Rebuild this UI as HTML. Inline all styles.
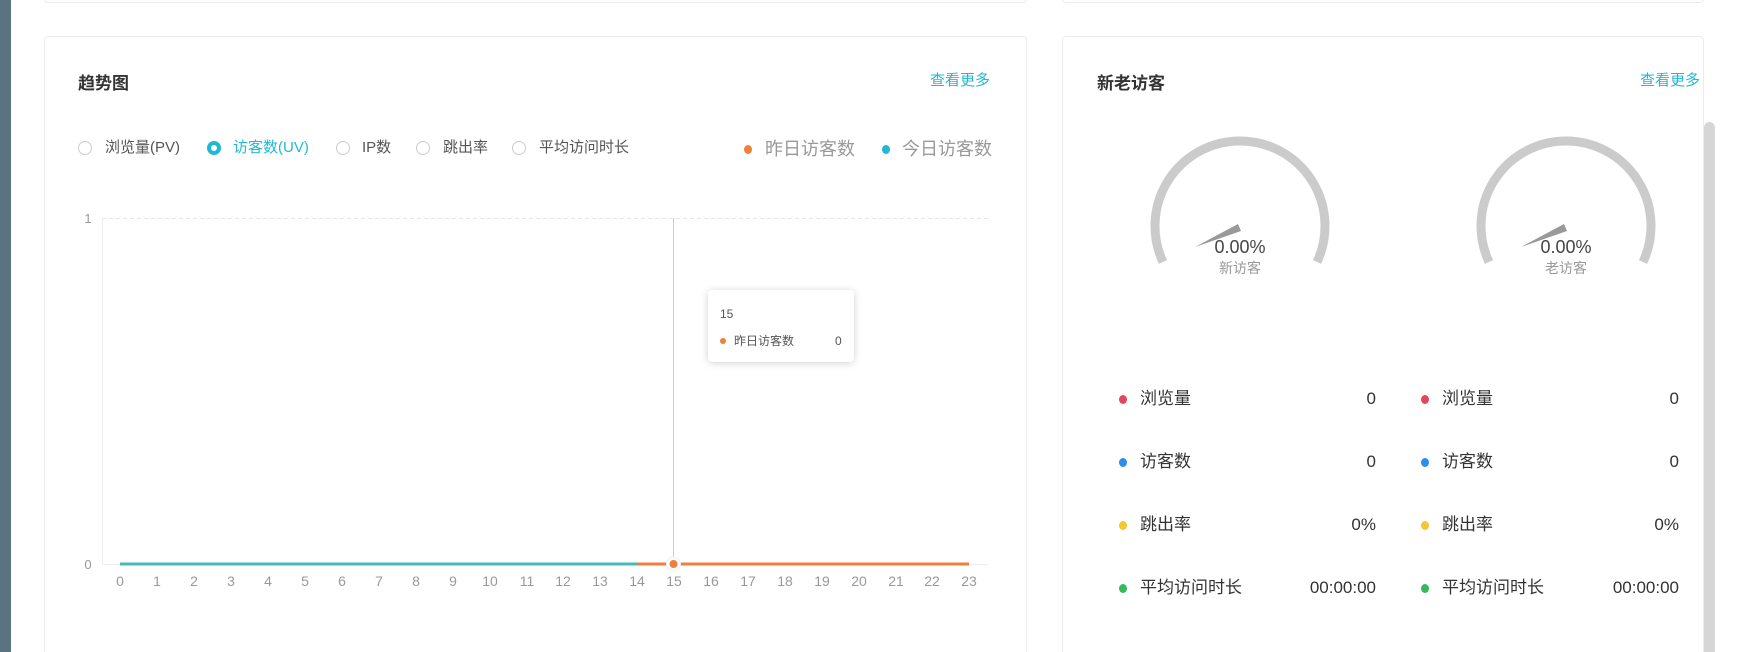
<!DOCTYPE html>
<html><head><meta charset="utf-8"><style>
*{margin:0;padding:0;box-sizing:border-box}
html{width:1740px;height:652px;overflow:hidden}
body{width:1740px;height:652px;background:#fff;position:relative;overflow:hidden;font-family:"Liberation Sans","Noto Sans CJK SC",sans-serif;color:#333;line-height:20px}
.abs{position:absolute;white-space:nowrap;line-height:20px}
.card{position:absolute;border:1px solid #ececec;border-radius:4px;background:#fff}
.title{font-size:17px;font-weight:bold;color:#333}
.more{font-size:15px;color:#22b8d4}
.radio{position:absolute;width:14px;height:14px;border:1px solid #ccc;border-radius:50%}
.rt{font-size:15px;color:#555}
.st{font-size:17px;color:#333}
.dot{position:absolute;width:8px;height:9px;border-radius:50%}
</style></head><body>
<div class="abs" style="left:0;top:0;width:11px;height:652px;background:#5b7283"></div>
<div class="card" style="left:44px;top:-10px;width:983px;height:13px"></div>
<div class="card" style="left:1062px;top:-10px;width:642px;height:13px"></div>
<div class="card" style="left:44px;top:36px;width:983px;height:620px"></div>
<div class="card" style="left:1062px;top:36px;width:642px;height:620px"></div>
<div class="abs" style="left:1704px;top:122px;width:11px;height:530px;background:#d6d6d6;border-radius:6px 6px 0 0"></div>

<div class="abs title" style="left:78px;top:74px">趋势图</div>
<div class="abs more" style="left:930px;top:71px">查看更多</div>
<div class="abs title" style="left:1097px;top:74px">新老访客</div>
<div class="abs more" style="left:1640px;top:71px">查看更多</div>

<div class="radio" style="left:78px;top:141px"></div><div class="abs rt" style="left:105px;top:138px">浏览量(PV)</div>
<div class="radio" style="left:207px;top:141px;border:4px solid #22b8d4"></div><div class="abs rt" style="left:233px;top:138px;color:#22b8d4">访客数(UV)</div>
<div class="radio" style="left:336px;top:141px"></div><div class="abs rt" style="left:362px;top:138px">IP数</div>
<div class="radio" style="left:416px;top:141px"></div><div class="abs rt" style="left:443px;top:138px">跳出率</div>
<div class="radio" style="left:512px;top:141px"></div><div class="abs rt" style="left:539px;top:138px">平均访问时长</div>

<div class="dot" style="left:744px;top:145px;background:#f07f3c"></div><div class="abs" style="left:765px;top:139px;font-size:18px;color:#999">昨日访客数</div>
<div class="dot" style="left:882px;top:145px;background:#22b8d4"></div><div class="abs" style="left:902px;top:139px;font-size:18px;color:#999">今日访客数</div>

<svg class="abs" style="left:0;top:0" width="1740" height="652">
<line x1="102" y1="218.5" x2="988" y2="218.5" stroke="#e6e6e6" stroke-dasharray="4,3"/>
<line x1="102.5" y1="218" x2="102.5" y2="564" stroke="#eee"/>
<line x1="102" y1="564.5" x2="988" y2="564.5" stroke="#eee"/>
<line x1="673.5" y1="218" x2="673.5" y2="564" stroke="#ccc"/>
<text x="88" y="223" font-size="13" fill="#999" text-anchor="middle" font-family="Liberation Sans">1</text>
<text x="88" y="569" font-size="13" fill="#999" text-anchor="middle" font-family="Liberation Sans">0</text>
<line x1="120" y1="564" x2="637" y2="564" stroke="#47b9bb" stroke-width="3"/>
<line x1="637" y1="564" x2="969" y2="564" stroke="#f07f3c" stroke-width="3"/>
<circle cx="673.5" cy="564" r="7" fill="#fff" stroke="#eee"/>
<circle cx="673.5" cy="564" r="4" fill="#f07f3c"/>
<g font-size="14" fill="#999" text-anchor="middle" font-family="Liberation Sans">
<text x="120" y="586">0</text><text x="157" y="586">1</text><text x="194" y="586">2</text><text x="231" y="586">3</text><text x="268" y="586">4</text><text x="305" y="586">5</text><text x="342" y="586">6</text><text x="379" y="586">7</text><text x="416" y="586">8</text><text x="453" y="586">9</text><text x="490" y="586">10</text><text x="527" y="586">11</text><text x="563" y="586">12</text><text x="600" y="586">13</text><text x="637" y="586">14</text><text x="674" y="586">15</text><text x="711" y="586">16</text><text x="748" y="586">17</text><text x="785" y="586">18</text><text x="822" y="586">19</text><text x="859" y="586">20</text><text x="896" y="586">21</text><text x="932" y="586">22</text><text x="969" y="586">23</text>
</g>
<g fill="none" stroke="#cbcbcb" stroke-width="9">
<path d="M1163,262 A85,85 0 1 1 1317,262"/>
<path d="M1489,262 A85,85 0 1 1 1643,262"/>
</g>
<polygon points="1195,247 1238,224 1241,231" fill="#999"/>
<polygon points="1521,247 1564,224 1567,231" fill="#999"/>
<g text-anchor="middle" font-family="Liberation Sans,Noto Sans CJK SC">
<text x="1240" y="253" font-size="18" fill="#444">0.00%</text>
<text x="1240" y="273" font-size="14" fill="#999">新访客</text>
<text x="1566" y="253" font-size="18" fill="#444">0.00%</text>
<text x="1566" y="273" font-size="14" fill="#999">老访客</text>
</g>
</svg>

<div class="abs" style="left:708px;top:290px;width:146px;height:72px;background:#fff;border-radius:4px;box-shadow:0 1px 8px rgba(0,0,0,.18)">
<div class="abs" style="left:12px;top:14px;font-size:12px;color:#555">15</div>
<div class="dot" style="left:12px;top:48px;width:6px;height:6px;background:#f07f3c"></div>
<div class="abs" style="left:26px;top:41px;font-size:12px;color:#555">昨日访客数</div>
<div class="abs" style="left:127px;top:41px;font-size:12px;color:#555">0</div>
</div>

<div class="dot" style="left:1119px;top:395px;background:#e5455f"></div><div class="abs st" style="left:1140px;top:389px">浏览量</div><div class="abs st" style="left:1300px;top:389px;width:76px;text-align:right">0</div>
<div class="dot" style="left:1421px;top:395px;background:#e5455f"></div><div class="abs st" style="left:1442px;top:389px">浏览量</div><div class="abs st" style="left:1600px;top:389px;width:79px;text-align:right">0</div>
<div class="dot" style="left:1119px;top:458px;background:#2d8cf0"></div><div class="abs st" style="left:1140px;top:452px">访客数</div><div class="abs st" style="left:1300px;top:452px;width:76px;text-align:right">0</div>
<div class="dot" style="left:1421px;top:458px;background:#2d8cf0"></div><div class="abs st" style="left:1442px;top:452px">访客数</div><div class="abs st" style="left:1600px;top:452px;width:79px;text-align:right">0</div>
<div class="dot" style="left:1119px;top:521px;background:#f5c630"></div><div class="abs st" style="left:1140px;top:515px">跳出率</div><div class="abs st" style="left:1300px;top:515px;width:76px;text-align:right">0%</div>
<div class="dot" style="left:1421px;top:521px;background:#f5c630"></div><div class="abs st" style="left:1442px;top:515px">跳出率</div><div class="abs st" style="left:1600px;top:515px;width:79px;text-align:right">0%</div>
<div class="dot" style="left:1119px;top:584px;background:#35b95a"></div><div class="abs st" style="left:1140px;top:578px">平均访问时长</div><div class="abs st" style="left:1290px;top:578px;width:86px;text-align:right">00:00:00</div>
<div class="dot" style="left:1421px;top:584px;background:#35b95a"></div><div class="abs st" style="left:1442px;top:578px">平均访问时长</div><div class="abs st" style="left:1590px;top:578px;width:89px;text-align:right">00:00:00</div>
</body></html>
